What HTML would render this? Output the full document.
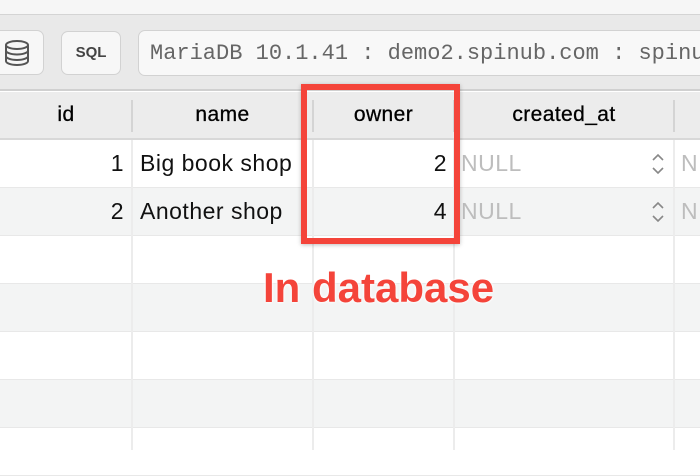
<!DOCTYPE html>
<html><head><style>
*{margin:0;padding:0;box-sizing:border-box}
body{width:700px;height:450px;overflow:hidden;background:#fff;font-family:"Liberation Sans",sans-serif;position:relative}
.abs{position:absolute}
.top{left:0;top:0;width:700px;height:15px;background:#f6f6f6;border-bottom:1px solid #d4d4d4}
.tb{left:0;top:15px;width:700px;height:76px;background:#e9e9e9;border-bottom:2px solid #d0d0d0}
.btn{background:#f7f7f7;border:1px solid #d2d2d2;border-radius:7px}
.hdr{left:0;top:92px;width:700px;height:48px;background:#ececec;border-bottom:2px solid #d8d8d8}
.hl{font-size:21px;color:#000;top:103px;text-align:center;letter-spacing:0.4px;-webkit-text-stroke:0.3px #000}
.row{left:0;width:700px;height:48px;border-bottom:1px solid #e8e8e8}
.vl{top:140px;width:2px;height:310px;background:#ececec}
.hv{top:100px;width:2px;height:32px;background:#d4d4d4}
.cell{font-size:23px;color:#111;letter-spacing:0.5px}
.null{font-size:23px;color:#bdbdbd;letter-spacing:0.5px}
</style></head><body>
<div class="abs top"></div>
<div class="abs tb"></div>
<div class="abs btn" style="left:-10px;top:30px;width:54px;height:45px"></div>
<svg class="abs" style="left:2px;top:38px" width="30" height="30" viewBox="0 0 30 30" fill="none" stroke="#555" stroke-width="2"><ellipse cx="15" cy="7" rx="11" ry="4"/><path d="M4 7v16c0 2.2 4.9 4 11 4s11-1.8 11-4V7M4 12.5c0 2.2 4.9 4 11 4s11-1.8 11-4M4 18c0 2.2 4.9 4 11 4s11-1.8 11-4"/></svg>
<div class="abs btn" style="left:61px;top:31px;width:60px;height:44px;font-weight:bold;font-size:15px;color:#444;text-align:center;line-height:42px">SQL</div>
<div class="abs btn" style="left:138px;top:30px;width:600px;height:46px;background:#f8f8f8;font-family:'Liberation Mono',monospace;font-size:22px;color:#666;line-height:46px;padding-left:11px;white-space:nowrap;overflow:hidden">MariaDB 10.1.41 : demo2.spinub.com : spinub</div>
<div class="abs hdr"></div>
<div class="abs hv" style="left:131px"></div><div class="abs hv" style="left:312px"></div><div class="abs hv" style="left:453px"></div><div class="abs hv" style="left:673px"></div>
<div class="abs hl" style="left:0;width:132px">id</div>
<div class="abs hl" style="left:132px;width:181px">name</div>
<div class="abs hl" style="left:313px;width:141px">owner</div>
<div class="abs hl" style="left:454px;width:220px">created_at</div>
<div class="abs row" style="top:140px;background:#fff"></div>
<div class="abs row" style="top:188px;background:#f3f4f4"></div>
<div class="abs row" style="top:236px;background:#fff"></div>
<div class="abs row" style="top:284px;background:#f3f4f4"></div>
<div class="abs row" style="top:332px;background:#fff"></div>
<div class="abs row" style="top:380px;background:#f3f4f4"></div>
<div class="abs row" style="top:428px;background:#fff"></div>
<div class="abs vl" style="left:131px"></div><div class="abs vl" style="left:312px"></div><div class="abs vl" style="left:453px"></div><div class="abs vl" style="left:673px"></div>
<div class="abs cell" style="left:0;width:124px;text-align:right;top:150px">1</div>
<div class="abs cell" style="left:140px;top:150px">Big book shop</div>
<div class="abs cell" style="left:313px;width:134px;text-align:right;top:150px">2</div>
<div class="abs null" style="left:461px;top:150px">NULL</div>
<div class="abs null" style="left:681px;top:150px">N</div>
<div class="abs cell" style="left:0;width:124px;text-align:right;top:198px">2</div>
<div class="abs cell" style="left:140px;top:198px">Another shop</div>
<div class="abs cell" style="left:313px;width:134px;text-align:right;top:198px">4</div>
<div class="abs null" style="left:461px;top:198px">NULL</div>
<div class="abs null" style="left:681px;top:198px">N</div>
<svg class="abs" style="left:650px;top:152px" width="16" height="24" viewBox="0 0 16 24" fill="none" stroke="#888" stroke-width="1.6"><path d="M3 8l5-5 5 5M3 16l5 5 5-5"/></svg>
<svg class="abs" style="left:650px;top:200px" width="16" height="24" viewBox="0 0 16 24" fill="none" stroke="#888" stroke-width="1.6"><path d="M3 8l5-5 5 5M3 16l5 5 5-5"/></svg>
<div class="abs" style="left:301px;top:84px;width:159px;height:160px;border:6px solid #f4443a;box-shadow:0 1px 4px rgba(0,0,0,.25)"></div>
<div class="abs" style="left:263px;top:264px;font-size:42px;font-weight:bold;color:#f4443a;white-space:nowrap;text-shadow:0 0 3px #fff,0 0 3px #fff">In database</div>
</body></html>
